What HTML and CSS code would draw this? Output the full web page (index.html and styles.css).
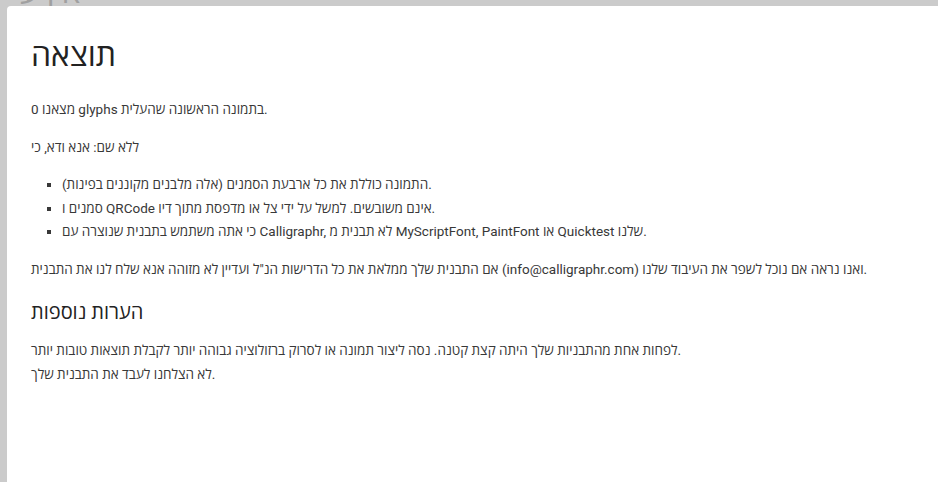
FILE: index.html
```html
<!DOCTYPE html>
<html lang="he">
<head>
<meta charset="utf-8">
<link rel="stylesheet" href="styles.css">
</head>
<body>
<div class="page">
  <div class="page-title">אין ע</div>
</div>
<div class="overlay">
  <div class="dialog">
    <h1 class="title">תוצאה</h1>
    <p>מצאנו 0 glyphs בתמונה הראשונה שהעלית.</p>
    <p>ללא שם: אנא ודא, כי</p>
    <ul class="reqs">
      <li>התמונה כוללת את כל ארבעת הסמנים (אלה מלבנים מקוננים בפינות).</li>
      <li>סמנים ו QRCode אינם משובשים. למשל על ידי צל או מדפסת מתוך דיו.</li>
      <li>כי אתה משתמש בתבנית שנוצרה עם Calligraphr, לא תבנית מ MyScriptFont, PaintFont או Quicktest שלנו.</li>
    </ul>
    <p>אם התבנית שלך ממלאת את כל הדרישות הנ"ל ועדיין לא מזוהה אנא שלח לנו את התבנית (info@calligraphr.com) ואנו נראה אם נוכל לשפר את העיבוד שלנו.</p>
    <h2 class="subtitle">הערות נוספות</h2>
    <div class="notes">
      <div>לפחות אחת מהתבניות שלך היתה קצת קטנה. נסה ליצור תמונה או לסרוק ברזולוציה גבוהה יותר לקבלת תוצאות טובות יותר.</div>
      <div>לא הצלחנו לעבד את התבנית שלך.</div>
    </div>
  </div>
</div>
</body>
</html>
```

FILE: styles.css
```css
html, body {
  margin: 0;
  padding: 0;
  width: 938px;
  height: 482px;
  overflow: hidden;
}
body {
  background: #cbcbcb;
  font-family: Roboto, "Open Sans", sans-serif;
  position: relative;
}
.page {
  padding: 0 0 0 20px;
}
.page-title {
  margin-top: -23px;
  font-size: 32px;
  color: #a0a0a0;
  line-height: 30px;
}
.overlay {
  position: absolute;
  left: 7px;
  top: 6px;
  right: -20px;
  bottom: -20px;
}
.dialog {
  background: #ffffff;
  height: 100%;
  border-radius: 4px 0 0 0;
  padding: 31px 24px 0 24px;
  box-sizing: border-box;
  color: #383838;
  font-size: 13.5px;
  line-height: 24px;
}
.title {
  margin: 0 0 24px 0;
  font-size: 32px;
  font-weight: 400;
  line-height: 36px;
  color: #222222;
}
p {
  margin: 0 0 14px 0;
}
.reqs {
  margin: 0 0 13px 0;
  padding: 0 0 0 31px;
  list-style: square;
  line-height: 23.5px;
}
.subtitle {
  margin: 18px 0 13px 0;
  font-size: 20px;
  font-weight: 400;
  line-height: 26px;
  color: #222222;
}
```
